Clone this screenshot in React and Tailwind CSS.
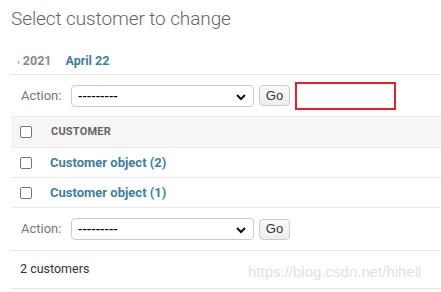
export default function App() {
  const Chevron = () => (
    <svg width="12" height="12" viewBox="0 0 12 12" className="absolute right-[6px] top-[5px]">
      <path d="M2 4 L6 8 L10 4" fill="none" stroke="#111" strokeWidth="2" />
    </svg>
  );
  const ActionRow = ({ box }) => (
    <div className="flex items-center h-full">
      <span className="text-[13px] text-[#777] w-[50px] ml-[10px]">Action:</span>
      <div className="relative w-[183px] h-[22px] border border-[#ccc] rounded-[4px] bg-white">
        <span className="absolute left-[6px] top-[1px] text-[13px] text-black font-medium">---------</span>
        <Chevron />
      </div>
      <div className="ml-[5px] w-[31px] h-[21px] border border-[#ccc] rounded-[4px] bg-gradient-to-b from-[#fbfbfb] to-[#ededed] flex items-center justify-center text-[13px] text-[#333] font-['Liberation_Sans',sans-serif]">
        Go
      </div>
      {box && <div className="ml-[5px] w-[101px] h-[28px] border-2 border-[#e8202a]" />}
    </div>
  );
  const Check = () => (
    <div className="w-[12px] h-[12px] border border-[#767676] rounded-[2px] bg-white ml-[9px]" />
  );
  return (
    <div className="w-[441px] h-[292px] bg-white overflow-hidden font-['Roboto',sans-serif] pl-[11px]">
      <div className="pt-[7px] h-[48px] text-[19px] font-light text-[#666] leading-[24px] tracking-[-0.1px]">
        Select customer to change
      </div>
      <div className="h-[27px] border-b border-[#e6e6e6] flex items-center text-[12.5px] font-bold">
        <span className="ml-[6px] text-[#888]"><span className="text-[9px] mr-[3px]">‹</span>2021</span>
        <span className="ml-[14px] text-[#447e9b]">April 22</span>
      </div>
      <div className="h-[41px]">
        <ActionRow box />
      </div>
      <div className="border-t border-[#eaeaea]">
        <div className="h-[31px] bg-[#f6f6f6] border-b border-[#eaeaea] flex items-center">
          <Check />
          <span className="ml-[19px] text-[11px] font-bold text-[#666] tracking-[0.2px]">CUSTOMER</span>
        </div>
        {["Customer object (2)", "Customer object (1)"].map((t) => (
          <div key={t} className="h-[30px] border-b border-[#eaeaea] flex items-center">
            <Check />
            <span className="ml-[18px] text-[13px] font-bold text-[#447e9b] mt-[1px]">{t}</span>
          </div>
        ))}
      </div>
      <div className="h-[43px] border-b border-[#e6e6e6]">
        <ActionRow />
      </div>
      <div className="h-[38px] border-b border-[#e6e6e6] flex items-center relative">
        <span className="ml-[9px] text-[12.5px] text-[#333]">2 customers</span>
        <span className="absolute left-[237px] top-[10px] text-[15px] text-[#e2e2e2] font-['Liberation_Sans',sans-serif]">https://blog.csdn.net/hihell</span>
      </div>
    </div>
  );
}
